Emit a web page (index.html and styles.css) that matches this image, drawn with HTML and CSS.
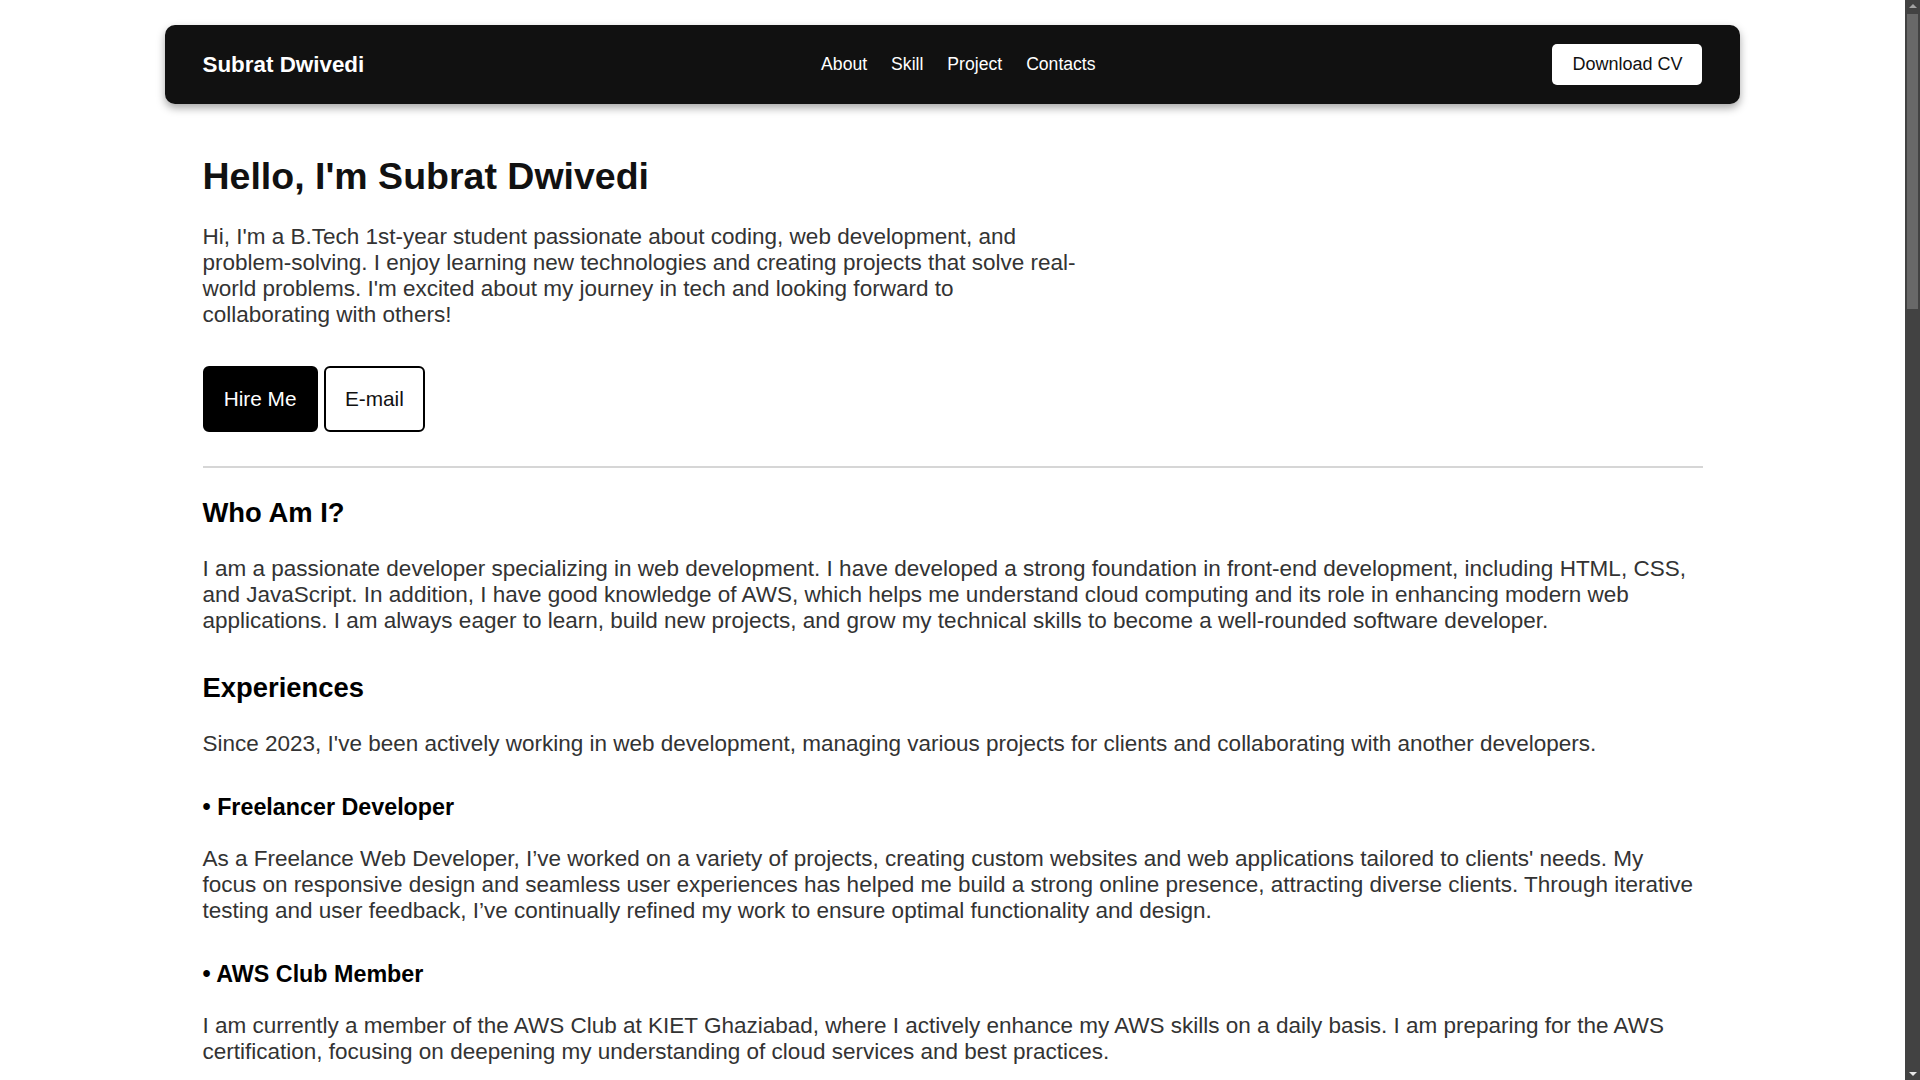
FILE: index.html
```html
<!DOCTYPE html>
<html lang="en">
<head>
<meta charset="UTF-8">
<title>Subrat Dwivedi</title>
<link rel="stylesheet" href="styles.css">
</head>
<body>
<div class="page">
  <nav class="navbar">
    <div class="logo">Subrat Dwivedi</div>
    <ul class="nav-links">
      <li><a href="#about">About</a></li>
      <li><a href="#skill">Skill</a></li>
      <li><a href="#project">Project</a></li>
      <li><a href="#contacts">Contacts</a></li>
    </ul>
    <a class="btn-cv" href="#">Download CV</a>
  </nav>

  <main class="main">
    <section class="hero">
      <h1 class="hero-title">Hello, I'm Subrat Dwivedi</h1>
      <p class="hero-text">Hi, I'm a B.Tech 1st-year student passionate about coding, web development, and problem-solving. I enjoy learning new technologies and creating projects that solve real-world problems. I'm excited about my journey in tech and looking forward to collaborating with others!</p>
      <div class="hero-actions">
        <a class="btn btn-dark" href="#">Hire Me</a>
        <a class="btn btn-light" href="#">E-mail</a>
      </div>
    </section>

    <hr class="divider">

    <section class="section" id="about">
      <h2 class="section-title">Who Am I?</h2>
      <p class="text">I am a passionate developer specializing in web development. I have developed a strong foundation in front-end development, including HTML, CSS, and JavaScript. In addition, I have good knowledge of AWS, which helps me understand cloud computing and its role in enhancing modern web applications. I am always eager to learn, build new projects, and grow my technical skills to become a well-rounded software developer.</p>
    </section>

    <section class="section">
      <h2 class="section-title">Experiences</h2>
      <p class="text">Since 2023, I've been actively working in web development, managing various projects for clients and collaborating with another developers.</p>
      <div class="exp-item">
        <h3 class="exp-title">• Freelancer Developer</h3>
        <p class="text">As a Freelance Web Developer, I’ve worked on a variety of projects, creating custom websites and web applications tailored to clients' needs. My focus on responsive design and seamless user experiences has helped me build a strong online presence, attracting diverse clients. Through iterative testing and user feedback, I’ve continually refined my work to ensure optimal functionality and design.</p>
      </div>
      <div class="exp-item">
        <h3 class="exp-title">• AWS Club Member</h3>
        <p class="text">I am currently a member of the AWS Club at KIET Ghaziabad, where I actively enhance my AWS skills on a daily basis. I am preparing for the AWS certification, focusing on deepening my understanding of cloud services and best practices.</p>
      </div>
    </section>
  </main>
</div>

<div class="scrollbar" aria-hidden="true">
  <span class="scroll-arrow scroll-up"></span>
  <span class="scroll-thumb"></span>
  <span class="scroll-arrow scroll-down"></span>
</div>
</body>
</html>
```
FILE: styles.css
```css
html {
  background: #ffffff;
}

body {
  margin: 0;
  padding-right: 15px;
  background: #ffffff;
  color: #333333;
  font-family: "Liberation Sans", Arial, sans-serif;
}

.page {
  max-width: 1575px;
  margin: 0 auto;
  padding-top: 25px;
  padding-bottom: 60px;
}

.navbar {
  display: flex;
  align-items: center;
  justify-content: space-between;
  background: #111111;
  border-radius: 10px;
  padding: 19.2px 37.5px;
  box-shadow: 0 4px 8px rgba(0, 0, 0, 0.35);
}

.logo {
  color: #ffffff;
  font-weight: bold;
  font-size: 22.4px;
}

.nav-links {
  display: flex;
  gap: 24px;
  list-style: none;
  margin: 0;
  padding: 0;
}

.nav-links a {
  color: #ffffff;
  text-decoration: none;
  font-size: 17.6px;
}

.btn-cv {
  background: #ffffff;
  color: #111111;
  text-decoration: none;
  font-size: 18px;
  padding: 10px 20px;
  border-radius: 5px;
}

.main {
  padding: 0 41.5px 0 37.5px;
}

.hero {
  padding-top: 51px;
}

.hero-title {
  margin: 0;
  font-size: 37.5px;
  font-weight: bold;
  color: #111111;
}

.hero-text {
  margin: 26px 0 0;
  max-width: 880px;
  font-size: 22.5px;
  color: #333333;
}

.hero-actions {
  display: flex;
  gap: 6px;
  margin-top: 38px;
}

.btn {
  font-size: 20.8px;
  padding: 18.7px 19.2px;
  border: 2px solid #000000;
  border-radius: 6px;
  text-decoration: none;
}

.btn-dark {
  background: #000000;
  color: #ffffff;
}

.btn-light {
  background: #ffffff;
  color: #111111;
}

.divider {
  margin: 34px -4px 0 0;
  border: none;
  border-top: 2px solid #d6d6d6;
}

.section {
  margin-top: 29.7px;
}

.section + .section {
  margin-top: 37.5px;
}

.section-title {
  margin: 0 0 27px;
  font-size: 27.4px;
  color: #000000;
}

.text {
  margin: 0;
  font-size: 22.5px;
  color: #333333;
}

.exp-item {
  margin-top: 37.5px;
}

.exp-title {
  margin: 0 0 24.5px;
  font-size: 23.3px;
  color: #000000;
}

/* static rendering of the browser's dark scrollbar */
.scrollbar {
  position: fixed;
  top: 0;
  right: 0;
  width: 15px;
  height: 100vh;
  background: #424242;
  display: flex;
  flex-direction: column;
  align-items: center;
}

.scroll-arrow {
  width: 0;
  height: 0;
  border-left: 4px solid transparent;
  border-right: 4px solid transparent;
}

.scroll-up {
  margin-top: 4px;
  border-bottom: 4px solid #a3a3a3;
}

.scroll-thumb {
  margin-top: 6px;
  width: 11px;
  height: 295px;
  background: #686868;
}

.scroll-down {
  margin-top: auto;
  margin-bottom: 4px;
  border-top: 4px solid #e6e6e6;
}
```
